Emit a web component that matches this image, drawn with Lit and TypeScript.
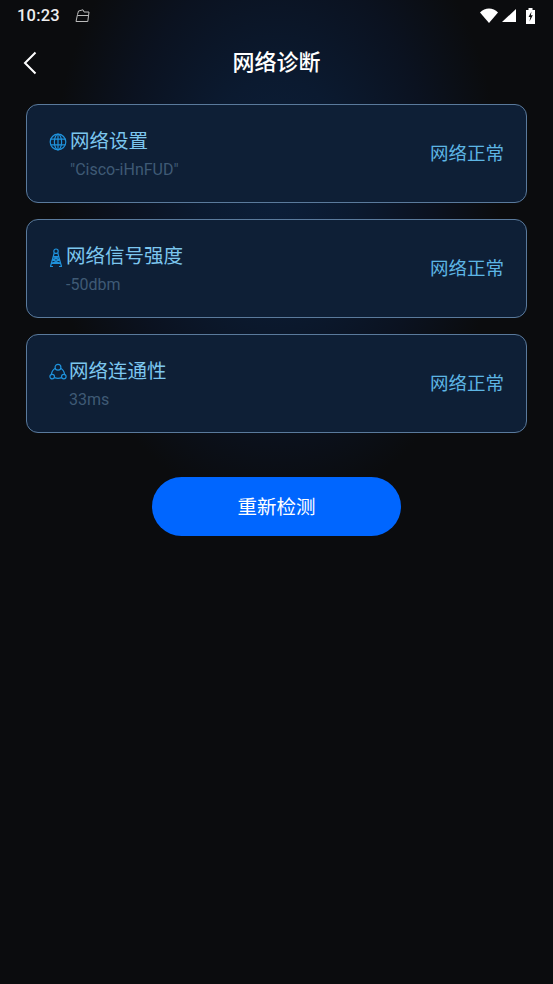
import { LitElement, html, css, svg } from "lit";
import { customElement } from "lit/decorators.js";

const globe = svg`<circle cx="9" cy="9" r="7.8"/><ellipse cx="9" cy="9" rx="3.6" ry="7.8"/><path d="M1.800 6.200h14.400M1.800 11.800h14.400M9 1.200v15.600"/>`;
const tower = svg`<circle cx="7" cy="3.200" r="2.200"/><path d="M5.200 5 1.500 18.500M8.800 5l3.700 13.500M1 18.500h3M10 18.500h3M4.300 8.500h5.400M3.300 12h7.400M2.300 15.500h9.400M4.300 8.500l6.400 3.500M9.700 8.500l-6.400 3.500M3.300 12l8.400 3.500M10.700 12l-8.400 3.500"/>`;
const triad = svg`<circle cx="9" cy="4.200" r="2.900"/><circle cx="3.200" cy="13.600" r="2.300"/><circle cx="14.800" cy="13.600" r="2.300"/><path d="M6.400 5.200C4 6.600 2.700 8.600 2.400 11.300M11.600 5.200c2.400 1.400 3.700 3.400 4 6.100M5.500 14.600c2.300 1 4.700 1 7 0"/>`;

const rows = [
  { icon: globe, vb: "0 0 18 18", w: 18, h: 18, gap: 3, title: "网络设置", sub: '"Cisco-iHnFUD"', subIndent: 21 },
  { icon: tower, vb: "0 0 14 19", w: 14, h: 19, gap: 3, title: "网络信号强度", sub: "-50dbm", subIndent: 17 },
  { icon: triad, vb: "0 0 18 18", w: 18, h: 18, gap: 2, title: "网络连通性", sub: "33ms", subIndent: 20 },
];

@customElement("app-root")
export class AppRoot extends LitElement {
  static styles = css`
    :host {
      display: block;
      width: 553px;
      height: 984px;
      overflow: hidden;
      background-color: #0b0c0e;
      background-image: radial-gradient(ellipse 225px 320px at 276px 190px, #0c1f3a 0%, #0b1a30 35%, #0b1220 70%, #0b0c0e 100%);
      font-family: "Roboto", "Noto Sans CJK SC", sans-serif;
      color: #fff;
    }
    .status {
      height: 31px;
      display: flex;
      align-items: center;
      justify-content: space-between;
      padding: 0 18px 0 17px;
      box-sizing: border-box;
    }
    .status-left { display: flex; align-items: center; gap: 15px; }
    .time { font-size: 16.500px; font-weight: 500; letter-spacing: 0.2px; color: #eee; }
    .status-right { display: flex; align-items: center; gap: 4px; }
    .nav {
      height: 62px;
      display: flex;
      align-items: center;
      justify-content: center;
      position: relative;
    }
    .back { position: absolute; left: 23px; top: 20px; display: block; }
    .title { font-size: 22px; font-weight: 500; color: #fff; padding-top: 2px; line-height: 64px; }
    .list {
      margin: 11px 26px 0;
      display: flex;
      flex-direction: column;
      gap: 16px;
    }
    .card {
      height: 99px;
      box-sizing: border-box;
      border: 1px solid #5a7a9c;
      border-radius: 12px;
      background: #0e1f36;
      display: flex;
      align-items: center;
      justify-content: space-between;
      padding: 0 22px;
    }
    .info { display: flex; flex-direction: column; gap: 2px; padding-top: 1px; }
    .head { display: flex; align-items: center; line-height: 30px; font-size: 19.500px; color: #7cc6ee; }
    .head svg { fill: none; stroke: #1f92dc; stroke-width: 1.200; display: block; flex: none; }
    .sub { font-size: 16px; line-height: 22px; color: #3f5a75; }
    .state { font-size: 18.500px; line-height: 26px; color: #5db5e4; padding-top: 1px; }
    .btn-wrap { display: flex; justify-content: center; margin-top: 44px; }
    .btn {
      width: 249px;
      height: 59px;
      border: none;
      border-radius: 30px;
      background: #0066ff;
      color: #fff;
      font: 19.500px "Roboto", "Noto Sans CJK SC", sans-serif;
      padding: 0 0 2px;
    }
  `;

  render() {
    return html`
      <div class="status">
        <div class="status-left">
          <span class="time">10:23</span>
          <svg width="15" height="14" viewBox="0 0 15 14" fill="none" stroke="#bbb" stroke-width="1">
            <path d="M2.500 5.500 3.500 2 8 .8 9 3 14 3 12.800 12.500 1 12.500ZM2.500 6.500H13"/>
          </svg>
        </div>
        <div class="status-right">
          <svg width="18" height="15" viewBox="0 0 18 15"><path d="M0 4.500C5 -.8 13 -.8 18 4.500L9 15Z" fill="#fff"/></svg>
          <svg width="14" height="13" viewBox="0 0 14 13"><path d="M14 0V13H0Z" fill="#fff"/></svg>
          <svg width="9" height="16" viewBox="0 0 9 16" style="margin-left:6px">
            <path d="M0 2H2.500V0H6.500V2H9V16H0Z" fill="#fff"/>
            <path d="M5.500 3.500 2.500 9H4.300L3.500 13.500 6.800 7.300H4.900Z" fill="#111"/>
          </svg>
        </div>
      </div>
      <div class="nav">
        <svg class="back" width="14" height="24" viewBox="0 0 14 24" fill="none" stroke="#fff" stroke-width="2">
          <path d="M12.500 1.500 2 12 12.500 22.500"/>
        </svg>
        <span class="title">网络诊断</span>
      </div>
      <div class="list">
        ${rows.map(
          (r) => html`
            <div class="card">
              <div class="info">
                <div class="head">
                  <svg width=${r.w} height=${r.h} viewBox=${r.vb} style="margin-right:${r.gap}px">${r.icon}</svg>
                  <span>${r.title}</span>
                </div>
                <div class="sub" style="padding-left:${r.subIndent}px">${r.sub}</div>
              </div>
              <div class="state">网络正常</div>
            </div>
          `
        )}
      </div>
      <div class="btn-wrap"><button class="btn">重新检测</button></div>
    `;
  }
}
